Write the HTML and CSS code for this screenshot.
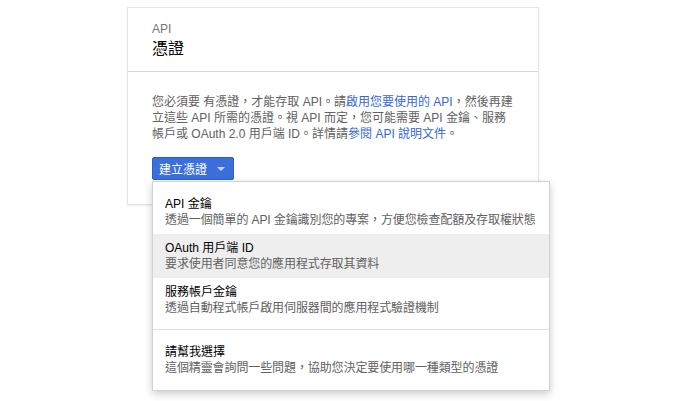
FILE: index.html
```html
<!DOCTYPE html>
<html lang="zh-Hant">

<head>
  <meta charset="UTF-8">
  <meta name="viewport" content="width=device-width, initial-scale=1.0">
  <title>憑證</title>
  <link rel="stylesheet" href="styles.css">
</head>

<body>
  <div class="page">
    <div class="card">
      <div class="card-header">
        <div class="card-label">API</div>
        <h1 class="card-title">憑證</h1>
      </div>
      <div class="card-body">
        <p>您必須要 有憑證，才能存取 API。請<a href="#">啟用您要使用的 API</a>，然後再建立這些 API 所需的憑證。視 API 而定，您可能需要 API 金鑰、服務帳戶或 OAuth 2.0 用戶端 ID。詳情請<a href="#">參閱 API 說明文件</a>。</p>
        <div class="dropdown">
          <button class="btn-primary">建立憑證 <span class="caret"></span></button>
          <div class="menu">
            <div class="menu-item">
              <div class="item-title">API 金鑰</div>
              <div class="item-desc">透過一個簡單的 API 金鑰識別您的專案，方便您檢查配額及存取權狀態</div>
            </div>
            <div class="menu-item active">
              <div class="item-title">OAuth 用戶端 ID</div>
              <div class="item-desc">要求使用者同意您的應用程式存取其資料</div>
            </div>
            <div class="menu-item">
              <div class="item-title">服務帳戶金鑰</div>
              <div class="item-desc">透過自動程式帳戶啟用伺服器間的應用程式驗證機制</div>
            </div>
            <div class="menu-divider"></div>
            <div class="menu-item">
              <div class="item-title">請幫我選擇</div>
              <div class="item-desc">這個精靈會詢問一些問題，協助您決定要使用哪一種類型的憑證</div>
            </div>
          </div>
        </div>
      </div>
    </div>
  </div>
</body>

</html>
```

FILE: styles.css
```css
html,
body {
  height: 100%;
}

body {
  font-family: "Liberation Sans", Arial, "Noto Sans CJK TC", sans-serif;
  font-size: 12px;
  background-color: #fff;
  color: #212121;
  margin: 0;
  padding: 0;
  min-height: 401px;
}

.page {
  padding: 7px 0 0 127px;
}

.card {
  width: 410px;
  background-color: #fff;
  border: 1px solid #e4e4e4;
  box-shadow: 0 1px 2px rgba(0, 0, 0, 0.06);
}

.card-header {
  padding: 13px 24px 10px;
  border-bottom: 1px solid #d6d6d6;
}

.card-label {
  color: #757575;
  font-size: 12px;
  line-height: 16px;
}

.card-title {
  margin: 0;
  font-size: 16px;
  font-weight: normal;
  line-height: 24px;
  color: #000;
}

.card-body {
  padding: 22px 24px 24px;
}

.card-body p {
  margin: 0 0 15px;
  line-height: 16px;
  color: #616161;
}

.card-body a {
  color: #3367d6;
  text-decoration: none;
}

.dropdown {
  position: relative;
}

.btn-primary {
  display: flex;
  align-items: center;
  gap: 10px;
  height: 23px;
  padding: 0 8px 0 6px;
  background-color: #3b6fdb;
  border: 1px solid #2d5fcb;
  border-radius: 2px;
  color: #fff;
  font-family: inherit;
  font-size: 12px;
  cursor: pointer;
}

.caret {
  width: 0;
  height: 0;
  border-left: 4px solid transparent;
  border-right: 4px solid transparent;
  border-top: 4px solid #c9d7f7;
}

.menu {
  position: absolute;
  z-index: 10;
  top: 24px;
  left: 0;
  width: 396px;
  padding: 8px 0;
  background-color: #fff;
  border: 1px solid #d2d2d2;
  box-shadow: 0 3px 8px rgba(0, 0, 0, 0.2);
}

.menu-item {
  height: 44px;
  padding: 6px 12px 0;
  box-sizing: border-box;
  white-space: nowrap;
}

.menu-item.active {
  background-color: #eeeeee;
}

.item-title {
  line-height: 16px;
  color: #000;
}

.item-desc {
  line-height: 16px;
  color: #616161;
  letter-spacing: -0.1px;
}

.menu-divider {
  height: 1px;
  margin: 7px 0 8px;
  background-color: #e0e0e0;
}
```
